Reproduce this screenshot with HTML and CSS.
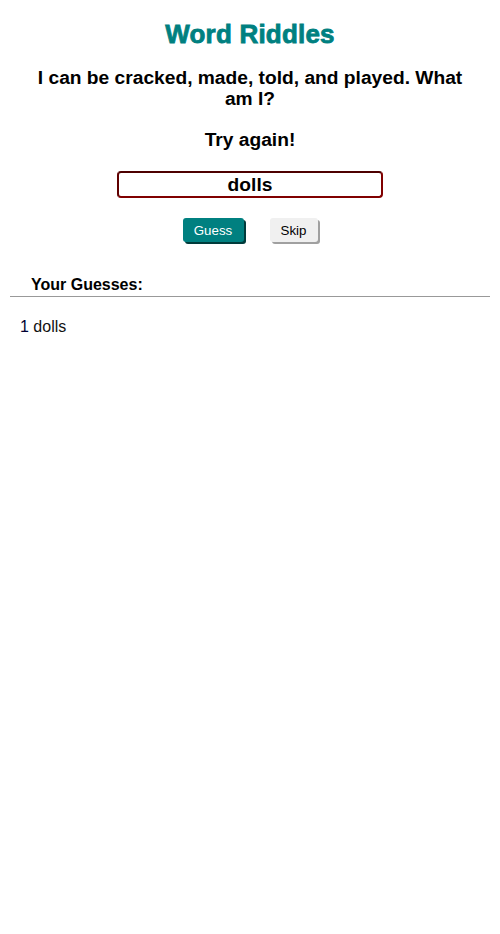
FILE: index.html
```html
<!DOCTYPE html>
<html>
<head>
<meta charset="utf-8">
<link rel="stylesheet" href="styles.css">
</head>
<body>
<div class="app">
  <h1 class="title">Word Riddles</h1>
  <h2 class="riddle">I can be cracked, made, told, and played. What am I?</h2>
  <h2 class="status">Try again!</h2>
  <div class="input-row">
    <input class="guess-input" type="text" value="dolls">
  </div>
  <div class="buttons">
    <button class="btn btn-guess">Guess</button>
    <button class="btn btn-skip">Skip</button>
  </div>
  <div class="guesses">
    <h3 class="guesses-title">Your Guesses:</h3>
    <hr class="divider">
    <ol class="guess-list">
      <li class="guess-item"><span class="num">1</span> dolls</li>
    </ol>
  </div>
</div>
</body>
</html>
```
FILE: styles.css
```css
html, body {
  margin: 0;
  padding: 0;
  background: #fff;
}
body {
  font-family: "Liberation Sans", Arial, sans-serif;
  color: #000;
}
.app {
  padding: 19px 10px 0;
}
.title {
  margin: 0;
  text-align: center;
  font-size: 26px;
  line-height: 30px;
  font-weight: bold;
  color: #008080;
  letter-spacing: 0.2px;
  -webkit-text-stroke: 0.8px #008080;
}
.riddle {
  margin: 18px 20px 0;
  text-align: center;
  font-size: 19.2px;
  line-height: 21px;
  font-weight: bold;
}
.status {
  margin: 20px 0 0;
  text-align: center;
  font-size: 19.2px;
  line-height: 22px;
  font-weight: bold;
}
.input-row {
  display: flex;
  justify-content: center;
  margin-top: 20px;
}
.guess-input {
  box-sizing: border-box;
  width: 266px;
  height: 27px;
  border: 2px solid #800000;
  border-top-color: #4d0000;
  border-left-color: #600000;
  border-radius: 4px;
  font-family: "Liberation Sans", Arial, sans-serif;
  font-size: 19.2px;
  font-weight: bold;
  text-align: center;
  color: #000;
  padding: 0;
  outline: none;
}
.buttons {
  display: flex;
  justify-content: center;
  gap: 26px;
  margin-top: 20px;
}
.btn {
  box-sizing: border-box;
  height: 24px;
  border: none;
  border-radius: 3px;
  font-family: "Liberation Sans", Arial, sans-serif;
  font-size: 13.3px;
  padding: 0;
  cursor: pointer;
}
.btn-guess {
  width: 61px;
  background: #008080;
  color: #fff;
  box-shadow: 2px 2px 0 #003b3b;
}
.btn-skip {
  width: 48px;
  background: #f0f0f0;
  color: #000;
  box-shadow: 2px 2px 0 #a0a0a0;
}
.guesses {
  margin-top: 34px;
}
.guesses-title {
  margin: 0 0 0 21px;
  font-size: 16px;
  line-height: 18px;
  font-weight: bold;
}
.divider {
  margin: 2px 0 0;
  border: none;
  border-top: 1px solid #999;
  height: 0;
}
.guess-list {
  list-style: none;
  margin: 21px 0 0;
  padding: 0 0 0 10px;
}
.guess-item {
  font-size: 16px;
  line-height: 18px;
  color: #111;
}
.num {
  color: #000033;
}
```
